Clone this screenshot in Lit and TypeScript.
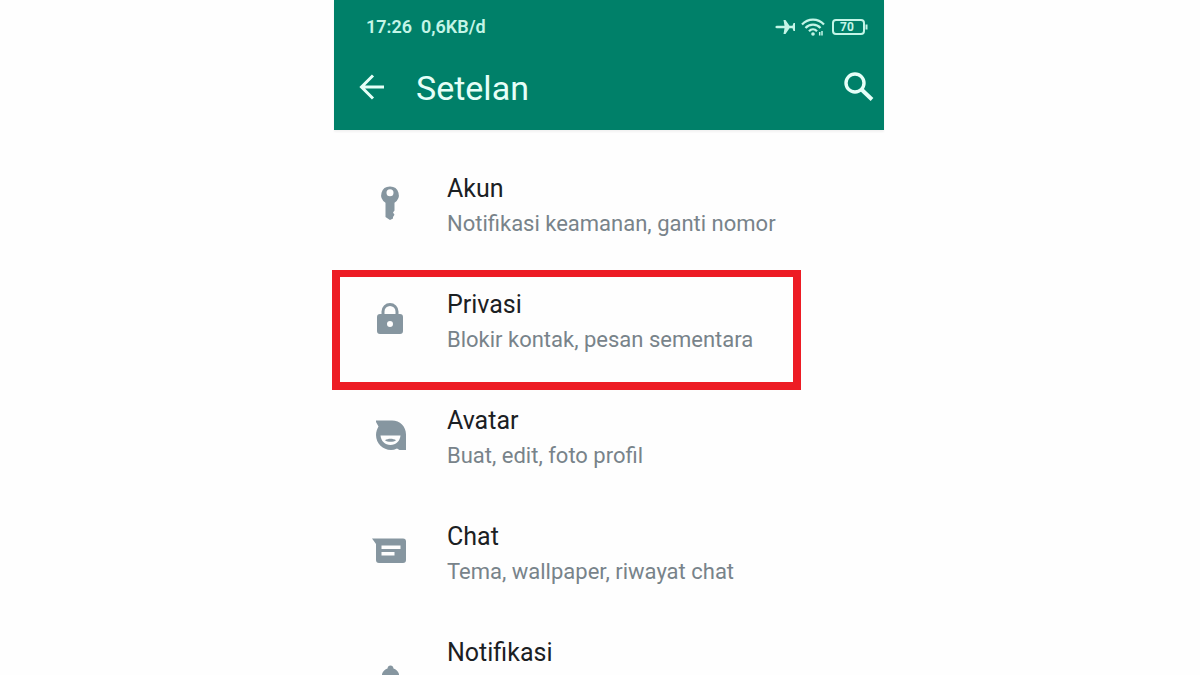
import { LitElement, html, svg, css, nothing } from "lit";
import { customElement, property } from "lit/decorators.js";

const icons: Record<string, unknown> = {
  key: svg`<path fill-rule="evenodd" d="M18 0.500a8.700 8.700 0 0 1 4.500 16.200v7.800l-1.500 2 1.500 2.200-1.500 2.300v1.500l-3 1.500-4.500-3V16.700A8.700 8.700 0 0 1 18 0.500zm0 2.800a3.500 3.500 0 1 0 0 7 3.500 3.500 0 0 0 0-7z"/>`,
  lock: svg`<path fill-rule="evenodd" d="M9.500 12V9.500a8.500 8.500 0 0 1 17 0V12H28a3 3 0 0 1 3 3v14a3 3 0 0 1-3 3H8a3 3 0 0 1-3-3V15a3 3 0 0 1 3-3zm3 0h11V9.500a5.500 5.500 0 0 0-11 0zm5.500 7a3 3 0 1 0 0 6 3 3 0 0 0 0-6z"/>`,
  avatar: svg`<path fill-rule="evenodd" d="M4 2.500H20c8 0 14 6 14 14V32h-6.500l-2.500-1.500C23 31.500 21 32 19 32 11 32 4 25.500 4 17c0-3.500 1.300-6.300 2.500-8.500L4 4zM8.500 17.500c.5 5.500 4.500 9.500 10 9.500s9.500-4 10-9.500z"/><path d="M13 22.300c3-2 8-2 11 0-2.500 2-8.500 2-11 0z"/>`,
  chat: svg`<path fill-rule="evenodd" d="M0 4.500h31a3 3 0 0 1 3 3V26a3 3 0 0 1-3 3H7a3 3 0 0 1-3-3V10zM9.500 11.500v3.500h19v-3.500zm0 6.500v3.500h13V18z"/>`,
  bell: svg`<path d="M18.500 15.500c1.700 0 2.800 1.200 3 3 2.500 1 4.500 2.500 5.500 5.500v12H10V24c1-3 3-4.500 5.500-5.500.2-1.800 1.300-3 3-3z"/>`,
};

@customElement("setting-row")
class SettingRow extends LitElement {
  @property() icon = "";
  @property() name = "";
  @property() detail = "";
  @property({ type: Boolean }) marked = false;

  static styles = css`
    :host { display: block; }
    .row {
      position: relative;
      display: flex;
      gap: 39px;
      padding: 26px 24px 20px 38px;
      color: inherit;
      text-decoration: none;
    }
    .icon { flex: none; width: 36px; height: 36px; margin-top: 13px; fill: #8696a0; }
    .name { display: block; font-size: 25px; line-height: 32px; color: #1b2023; }
    .detail { display: block; font-size: 22px; line-height: 38px; color: #78838a; }
    .mark {
      position: absolute;
      top: 7px;
      left: -2px;
      right: 83px;
      height: 120px;
      box-sizing: border-box;
      border: 7px solid #ed1c24;
      border-width: 7px 8px 8px;
      pointer-events: none;
    }
  `;

  render() {
    return html`
      <a class="row" href="#">
        <svg class="icon" viewBox="0 0 36 36" aria-hidden="true">${icons[this.icon]}</svg>
        <span>
          <span class="name">${this.name}</span>
          ${this.detail ? html`<span class="detail">${this.detail}</span>` : nothing}
        </span>
        ${this.marked ? html`<span class="mark"></span>` : nothing}
      </a>
    `;
  }
}

@customElement("app-root")
class AppRoot extends LitElement {
  static styles = css`
    :host {
      display: grid;
      grid-template-columns: 334fr 550fr 316fr;
      height: 100vh;
      overflow: hidden;
      background: #fefefe;
      font-family: Roboto, "Noto Sans", sans-serif;
    }
    .phone { grid-column: 2; min-width: 0; }
    .header { background: #008069; color: #e6fff8; box-shadow: 0 2px 2px #0000000d; }
    .status {
      display: flex;
      align-items: center;
      justify-content: space-between;
      padding: 14px 16px 0 32px;
      font-size: 18px;
      font-weight: 600;
      line-height: 26px;
      color: #c4f5e7;
    }
    .info { display: flex; gap: 9px; }
    .signals { display: flex; align-items: center; gap: 6px; }
    .signals svg { display: block; }
    .bar { display: flex; align-items: center; padding: 18px 9px 12px 22px; }
    .title { flex: 1; margin: 0 0 0 28px; font-size: 34px; font-weight: 400; line-height: 60px; }
    .button { display: block; padding: 0; border: 0; background: none; color: inherit; }
    .button svg { display: block; }
    .list { margin: 0; padding: 17px 0 0; list-style: none; }
  `;

  render() {
    return html`
      <main class="phone">
        <header class="header">
          <div class="status">
            <span class="info"><span>17:26</span><span>0,6KB/d</span></span>
            <span class="signals">
              <svg width="20" height="18" viewBox="0 0 20 18" fill="currentColor" aria-hidden="true">
                <path d="M0 9l1.500-1.200h8L8.500 2h2l4 5.800h3L18.500 5H20v8h-1.500L17.500 10.200h-3L10.500 16h-2l1-5.800h-8z"/>
              </svg>
              <svg width="24" height="20" viewBox="0 0 24 20" fill="none" stroke="currentColor" stroke-width="2.200" aria-hidden="true">
                <path d="M1 7.500c6-6.500 16-6.500 22 0M4.500 11c4-4.500 11-4.500 15 0M8 14.200c2.300-2.600 5.700-2.600 8 0"/>
                <circle cx="12" cy="17" r="1.800" fill="currentColor" stroke="none"/>
                <path stroke-width="1.500" d="M18.700 18.500v-3.500M21 14v4.500"/>
              </svg>
              <svg width="37" height="18" viewBox="0 0 37 18" fill="none" stroke="currentColor" stroke-width="2" role="img" aria-label="70%">
                <rect x="2" y="2" width="31" height="14" rx="3"/>
                <path d="M35.500 6.500v5"/>
                <text x="16" y="13" text-anchor="middle" font-size="12" font-weight="700" fill="currentColor" stroke="none">70</text>
              </svg>
            </span>
          </div>
          <div class="bar">
            <button class="button" type="button" aria-label="Kembali">
              <svg width="32" height="32" viewBox="0 0 32 32" fill="none" stroke="currentColor" stroke-width="3">
                <path d="M28 15H6M17 3.500L5.500 15 17 26.500"/>
              </svg>
            </button>
            <h1 class="title">Setelan</h1>
            <button class="button" type="button" aria-label="Cari">
              <svg width="32" height="32" viewBox="0 0 32 32" fill="none" stroke="currentColor" stroke-width="3.400">
                <circle cx="12" cy="11" r="9"/>
                <path stroke-width="4" d="M18.500 17.500L29 27.500"/>
              </svg>
            </button>
          </div>
        </header>
        <ul class="list">
          <li><setting-row icon="key" name="Akun" detail="Notifikasi keamanan, ganti nomor"></setting-row></li>
          <li><setting-row icon="lock" name="Privasi" detail="Blokir kontak, pesan sementara" marked></setting-row></li>
          <li><setting-row icon="avatar" name="Avatar" detail="Buat, edit, foto profil"></setting-row></li>
          <li><setting-row icon="chat" name="Chat" detail="Tema, wallpaper, riwayat chat"></setting-row></li>
          <li><setting-row icon="bell" name="Notifikasi"></setting-row></li>
        </ul>
      </main>
    `;
  }
}
